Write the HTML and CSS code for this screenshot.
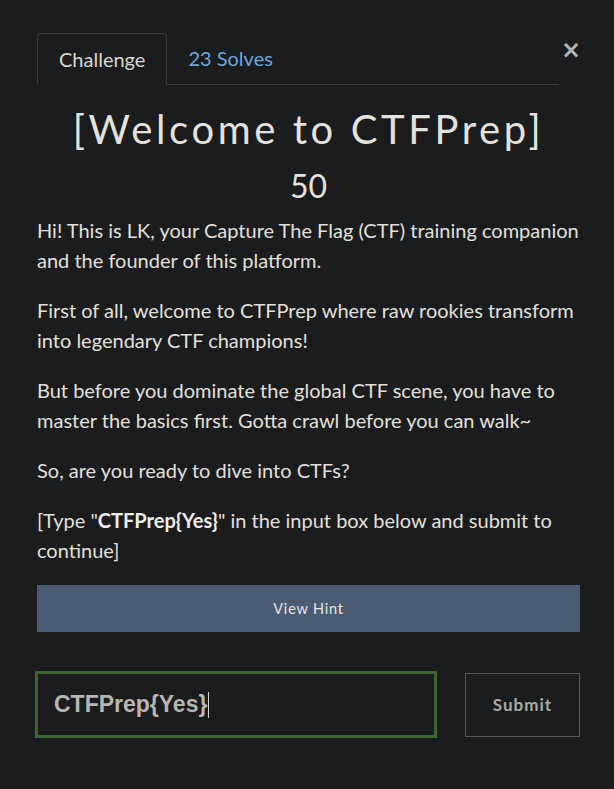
FILE: index.html
```html
<!DOCTYPE html>
<html>
<head>
<meta charset="utf-8">
<link rel="stylesheet" href="styles.css">
</head>
<body>
<div class="modal">
  <div class="header">
    <div class="tabs">
      <div class="tab active">Challenge</div>
      <div class="tab link">23 Solves</div>
    </div>
    <div class="close">&times;</div>
  </div>
  <h1 class="title">[Welcome to CTFPrep]</h1>
  <div class="points">50</div>
  <div class="desc">
    <p>Hi! This is LK, your Capture The Flag (CTF) training companion and the founder of this platform.</p>
    <p>First of all, welcome to CTFPrep where raw rookies transform into legendary CTF champions!</p>
    <p>But before you dominate the global CTF scene, you have to master the basics first. Gotta crawl before you can walk~</p>
    <p>So, are you ready to dive into CTFs?</p>
    <p>[Type "<b>CTFPrep{Yes}</b>" in the input box below and submit to continue]</p>
  </div>
  <div class="hint">View Hint</div>
  <div class="submit-row">
    <div class="input"><span class="value">CTFPrep{Yes}</span><span class="caret"></span></div>
    <div class="submit">Submit</div>
  </div>
</div>
</body>
</html>
```
FILE: styles.css
```css
html, body {
  margin: 0;
  padding: 0;
  background: #1b1c1d;
}
body {
  width: 614px;
  height: 789px;
  overflow: hidden;
}
.modal {
  padding: 33px 34px 0 37px;
  color: #e2e0dc;
  font-family: "Lato", sans-serif;
}
.header {
  display: flex;
  align-items: flex-start;
}
.tabs {
  display: flex;
  flex: 1;
  border-bottom: 1px solid #3a3b3d;
  height: 51px;
  margin-right: 3px;
}
.tab {
  font-size: 20px;
  line-height: 51px;
  padding: 0 21px;
  box-sizing: border-box;
}
.tab.active {
  border: 1px solid #3a3b3d;
  border-bottom-color: #1b1c1d;
  border-radius: 4px 4px 0 0;
  height: 52px;
  line-height: 51px;
  color: #d8d6d2;
}
.tab.link {
  color: #6ea6dc;
}
.close {
  width: 19px;
  font-family: "DejaVu Sans", sans-serif;
  font-size: 24px;
  font-weight: bold;
  line-height: 24px;
  color: #b4b4b4;
  margin-top: 5px;
  margin-left: -1px;
}
.title {
  margin: 20px 0 0;
  text-align: center;
  font-weight: 400;
  font-size: 40px;
  line-height: 48px;
  letter-spacing: 3.6px;
  color: #e4e2de;
}
.points {
  text-align: center;
  font-size: 32px;
  line-height: 42px;
  margin-top: 12px;
  color: #e4e2de;
}
.desc {
  margin-top: 8px;
  font-size: 20px;
  line-height: 30px;
}
.desc p {
  margin: 0 0 20px;
}
.desc b {
  font-weight: 700;
  color: #f0eeea;
}
.hint {
  height: 47px;
  background: #4a5b73;
  color: #e6e6e6;
  font-size: 14.5px;
  letter-spacing: 0.8px;
  line-height: 47px;
  text-align: center;
  margin-top: 0;
}
.submit-row {
  display: flex;
  justify-content: space-between;
  align-items: center;
  margin-top: 39px;
}
.input {
  box-sizing: border-box;
  width: 402px;
  height: 67px;
  margin-left: -2px;
  border: 3px solid #3d6630;
  display: flex;
  align-items: center;
  padding-left: 16px;
}
.value {
  font-family: "Liberation Sans", Arial, sans-serif;
  font-size: 23px;
  font-weight: bold;
  color: #b8b6b2;
}
.caret {
  width: 1px;
  height: 26px;
  background: #d0d0d0;
  margin-left: 1px;
}
.submit {
  box-sizing: border-box;
  width: 115px;
  height: 64px;
  border: 1px solid #555658;
  color: #a9a9a9;
  font-weight: 700;
  font-size: 17px;
  letter-spacing: 1px;
  display: flex;
  align-items: center;
  justify-content: center;
}
```
